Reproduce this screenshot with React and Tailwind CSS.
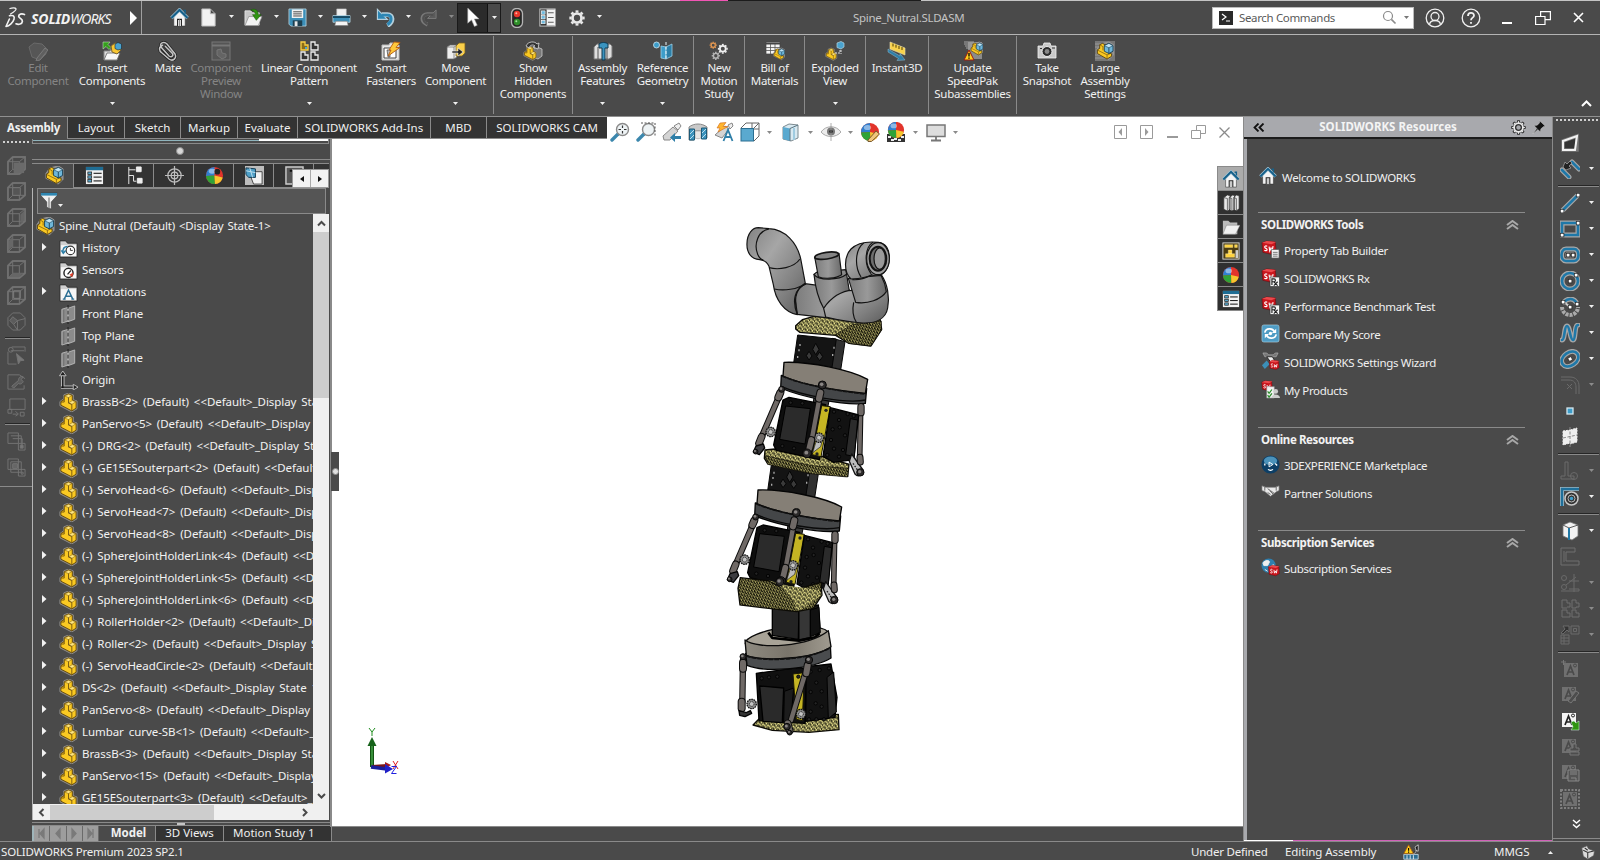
import React from "react";

const Svg = ({ s = 20, vb = 20, className = "", children }) => (
  <svg width={s} height={s} viewBox={`0 0 ${vb} ${vb}`} className={"block shrink-0 " + className} fill="none">
    {children}
  </svg>
);

const Caret = ({ c = "#f0f0f0", className = "" }) => (
  <svg width="5" height="3" viewBox="0 0 5 3" className={"block shrink-0 " + className}>
    <path d="M0 0h5L2.500 3z" fill={c} />
  </svg>
);

/* ---------- shared icon shapes ---------- */
const PartShape = () => (
  <g strokeLinejoin="round">
    <path d="M1 9l4-3V2l5-2 5 2v5l4 1.500v8L13.500 20 1 13.500z" fill="#8d8064" stroke="#8d8d8d" strokeWidth="1" />
    <path d="M2 9L5.500 7V3L10 1l4 1.500v5L18 9v7l-4.500 2.800L2 12.800z" fill="#fac922" stroke="#5d430a" strokeWidth=".9" />
    <path d="M6 3.200L10 1.400l3.600 1.300L10 4.800z" fill="#ffe680" stroke="#6b4d0c" strokeWidth=".5" />
    <path d="M10 10.500l4-2.500 3.600 1.300L13.500 12z" fill="#ffe680" stroke="#6b4d0c" strokeWidth=".5" />
    <path d="M10 4.800v5.700l3.500 1.500v6.500M5.500 7v2.500L2 9.500l0 0" stroke="#6b4d0c" strokeWidth=".9" />
  </g>
);
const AsmShape = () => (
  <g strokeLinejoin="round">
    <path d="M1 8l4-6 9-2 5 3v11l-5 5L1 13z" fill="#8a8a8a" stroke="#999" />
    <path d="M1.500 8.500L4 7V3l3-1.500 4 2L12 11l5 2v2.500L12 18.500 1.500 12.500z" fill="#fac922" stroke="#4c3808" strokeWidth=".9" />
    <path d="M4 3l3.500 2L7.500 9M12 14v4M2 9l10 5 5-2" stroke="#7c5a10" strokeWidth=".8" />
    <path d="M9 4l5-2.500L18.500 4v6L14 12.500 9 10z" fill="#6fb7da" stroke="#12394f" strokeWidth=".9" />
    <path d="M9 4l5 2.200L18.500 4 14 1.500z" fill="#bfe4f5" stroke="#12394f" strokeWidth=".6" />
    <path d="M14 6.200v6.300" stroke="#12394f" strokeWidth=".9" />
  </g>
);
const HomeShape = () => (
  <g>
    <path d="M4 9v10h12V9l-6-6z" fill="#f4f4f4" stroke="#333" strokeWidth=".6" />
    <path d="M8 19v-7h4v7" fill="#fff" stroke="#222" strokeWidth="1.200" />
    <path d="M10 12v7" stroke="#888" />
    <path d="M1.500 10.500L10 2l8.500 8.500" stroke="#a9c7d6" strokeWidth="3.600" />
    <path d="M1.500 10.500L10 2l8.500 8.500" stroke="#15608a" strokeWidth="2.200" />
    <path d="M14 2.500h2V6" stroke="#15608a" strokeWidth="1.500" />
  </g>
);
const ListShape = () => (
  <g>
    <rect x="1" y="1" width="18" height="18" fill="#f2f2f2" />
    <rect x="1" y="1" width="18" height="3.500" fill="#1f6d94" />
    {[6, 10, 14].map((y) => (
      <g key={y}>
        <rect x="3" y={y + 0.300} width="4" height="2.600" fill="#58a9cf" stroke="#222" strokeWidth=".8" />
        <path d={`M9 ${y + 1.700}h8.500`} stroke="#222" strokeWidth="1.200" />
      </g>
    ))}
  </g>
);
const BallShape = () => (
  <g>
    <circle cx="10" cy="10" r="9" fill="#e2342b" />
    <path d="M10 10V1A9 9 0 0 0 1 10.500z" fill="#2f7fd0" />
    <path d="M10 10L1 10.500A9 9 0 0 0 10.500 19z" fill="#2fa338" />
    <path d="M10 10l.5 9A9 9 0 0 0 18.600 12z" fill="#f6c62d" />
    <ellipse cx="7.500" cy="5.500" rx="3.600" ry="2.600" fill="#fff" opacity=".45" />
  </g>
);
const GearShape = ({ c = "#e8e8e8" }) => (
  <g stroke={c}>
    <circle cx="10" cy="10" r="5" strokeWidth="3" />
    {[0, 45, 90, 135, 180, 225, 270, 315].map((a) => (
      <path key={a} d="M10 4V1.500" strokeWidth="3.200" transform={`rotate(${a} 10 10)`} />
    ))}
  </g>
);
const SwCube = () => (
  <g>
    <path d="M1 3l5-2 9 1 1 10-5 3-9-2z" fill="#c9161d" stroke="#6b0a0e" strokeWidth=".6" />
    <path d="M1 3l10 1.500 5-2.500L6 1z" fill="#ea4a4d" />
    <path d="M6.500 6.800c-1-1-2.800-.6-2.600.8s2.400 1 2.500 2.400-1.800 1.600-2.900.6M8.500 7l.7 4.500 1.300-3 1.200 3 1-5" stroke="#fff" strokeWidth="1.200" />
  </g>
);

/* ---------- title bar ---------- */
const Logo = () => (
  <div className="flex h-full w-[142px] shrink-0 items-center border-r border-[#a0a0a0] pl-[5px]">
    <svg width="21" height="24" viewBox="0 0 21 24" fill="none" stroke="#f2f2f2" strokeLinecap="round" strokeLinejoin="round">
      <path d="M5 2.500c2-.8 5.500-1 6 .2.500 1.600-3 3.800-5.500 5.300" strokeWidth="1.300" />
      <path d="M4.500 9.800c3.500-1 5.500.2 4.500 3.400C8 16.500 4.500 20 1 20.500l3.400-7.500" strokeWidth="1.600" />
      <path d="M19.500 8.500c-3-1.200-6-.3-5.800 1.800.2 2 4 2.500 3.700 5-.3 2.700-3.700 3.600-6.400 2.500" strokeWidth="1.700" />
    </svg>
    <div className="ml-[5px] mt-[2px] flex w-[86px] text-[14px] italic leading-none text-[#f2f2f2]">
      <span className="font-bold tracking-[-0.100px]">SOLID</span>
      <span className="tracking-[-0.900px]">WORKS</span>
    </div>
    <svg width="8" height="14" viewBox="0 0 8 14" className="ml-[13px]">
      <path d="M0 0l7 7-7 7z" fill="#fff" />
    </svg>
  </div>
);

const QI = {
  home: <HomeShape />,
  doc: <path d="M3 1h9l5 5v13H3z M12 1v5h5" fill="#f1f1f1" stroke="#bbb" />,
  open: (
    <g>
      <path d="M1 3h6l2 2h7v13H1z" fill="#c8c8c8" stroke="#eee" strokeWidth=".8" />
      <path d="M1 18.500L5 9h14l-4 9.500z" fill="#f3f3f3" stroke="#888" strokeWidth=".7" />
      <path d="M7 2c5-2 8 0 8 5h3l-5 6-4-6h3c0-3-2-4-5-5z" fill="#2f9410" stroke="#1c5c0a" strokeWidth=".6" />
    </g>
  ),
  save: (
    <g>
      <path d="M1 1h18v18H3l-2-2z" fill="#3c8fb8" stroke="#bcd9e6" strokeWidth=".8" />
      <rect x="4" y="1.500" width="12" height="9" fill="#f2f2f2" />
      <path d="M5.500 4h9M5.500 6.200h9M5.500 8.400h9" stroke="#444" />
      <path d="M5 13h10v6H5z" fill="#1d3f50" />
      <path d="M7 14h3v5H7z" fill="#e8e8e8" />
    </g>
  ),
  print: (
    <g>
      <path d="M5 1h10v8H5z" fill="#f0f0f0" stroke="#bbb" strokeWidth=".6" />
      <path d="M1 8h18v7H1z" fill="#3c8fb8" stroke="#bcd9e6" strokeWidth=".8" />
      <path d="M1 9.500h18" stroke="#174a64" strokeWidth="2" />
      <path d="M4 14h12l1 4.500H3z" fill="#f4f4f4" stroke="#777" strokeWidth=".6" />
    </g>
  ),
  undo: (
    <g>
      <path d="M6 7h6c6.500 0 6.500 8 0 11.500" stroke="#b4d0dd" strokeWidth="5" />
      <path d="M1.500 1.500v10.500H12z" fill="#2c86b4" stroke="#b4d0dd" strokeWidth="1.200" />
      <path d="M6 7.500h6c5 0 5.500 7 0 10" stroke="#2c86b4" strokeWidth="3" />
    </g>
  ),
  redo: (
    <g>
      <path d="M15 6.500H9c-7 0-7.500 8 0 11" stroke="#7a7a7a" strokeWidth="4" />
      <path d="M18 2v9h-9z" fill="#5b5b5b" stroke="#7a7a7a" />
      <path d="M15 7H9c-6 0-6 7 0 10" stroke="#505050" strokeWidth="2.400" />
    </g>
  ),
  cursor: <path d="M5 0v16l4-3.500 3 7 3-1.300-3-6.700h5z" fill="#fff" stroke="#999" strokeWidth=".6" />,
  light: (
    <g>
      <rect x="4.500" y=".5" width="11" height="19" rx="5" fill="#262626" stroke="#b5b5b5" strokeWidth="1.300" />
      <circle cx="10" cy="6" r="3.200" fill="#e8372c" />
      <circle cx="10" cy="14" r="3.200" fill="#2f8f2a" />
      <circle cx="9.300" cy="5.200" r="1" fill="#ffb0a0" />
      <circle cx="9.300" cy="13.200" r="1" fill="#a5e29b" />
    </g>
  ),
  list: (
    <g>
      <rect x="2" y="1" width="16" height="18" fill="#222" stroke="#d0d0d0" />
      <rect x="9" y="1.500" width="9" height="17" fill="#f2f2f2" />
      {[3, 8, 13].map((y) => (
        <g key={y}>
          <rect x="3.500" y={y} width="4" height="3.600" fill="#6db9dd" stroke="#fff" strokeWidth=".7" />
          <path d={`M10.500 ${y + 2}h6`} stroke="#555" />
        </g>
      ))}
    </g>
  ),
  gear: <GearShape />,
};

const Quick = ({ name, w, dd, ddc }) => (
  <div className={"flex h-full shrink-0 items-center " + w}>
    <Svg s={19}>{QI[name]}</Svg>
    {dd && <Caret className="ml-[11px] mt-[-2px]" c={ddc} />}
  </div>
);

const TitleBar = () => (
  <div className="flex h-[34px] shrink-0 items-center border-b border-[#b4b4b4]">
    <Logo />
    <div className="flex h-full w-[28px] shrink-0" />
    <Quick name="home" w="w-[29px]" />
    <Quick name="doc" w="w-[45px]" dd />
    <Quick name="open" w="w-[44px]" dd />
    <Quick name="save" w="w-[44px]" dd />
    <Quick name="print" w="w-[44px]" dd />
    <Quick name="undo" w="w-[43px]" dd />
    <Quick name="redo" w="w-[38px]" dd ddc="#8a8a8a" />
    <div className="flex h-[30px] w-[44px] shrink-0 border border-[#1a1a1a] bg-[#4a4a4a]">
      <div className="flex w-[30px] items-center justify-center border-r border-[#111] bg-[#2b2b2b]">
        <Svg s={19}>{QI.cursor}</Svg>
      </div>
      <div className="flex flex-1 items-center justify-center">
        <Caret />
      </div>
    </div>
    <div className="ml-[6px] flex h-full items-center gap-[11px]">
      <Svg s={20}>{QI.light}</Svg>
      <Svg s={19}>{QI.list}</Svg>
      <Svg s={18}>{QI.gear}</Svg>
      <Caret className="mt-[-2px]" />
    </div>
    <div className="ml-[251px] w-[120px] whitespace-nowrap tracking-[-0.280px] text-[#c4c4c4]">Spine_Nutral.SLDASM</div>
    <div className="ml-auto flex h-[22px] w-[202px] items-center border border-[#bbb] bg-white pl-[6px]">
      <div className="flex h-[14px] w-[14px] items-center justify-center bg-[#2a2a2a]">
        <svg width="10" height="9" viewBox="0 0 10 9" fill="none" stroke="#fff">
          <path d="M1 1l4 3-4 3M5 8h4" strokeWidth="1.200" />
        </svg>
      </div>
      <span className="ml-[6px] whitespace-nowrap tracking-[-0.350px] text-[#5a5a5a]">Search Commands</span>
      <Svg s={15} className="ml-auto">
        <circle cx="8" cy="8" r="6" stroke="#8a8a8a" strokeWidth="1.600" />
        <path d="M12.500 12.500L18 18" stroke="#8a8a8a" strokeWidth="2.200" />
      </Svg>
      <Caret c="#777" className="ml-[7px] mr-[4px]" />
    </div>
    <div className="flex w-[186px] shrink-0 items-center pl-[11px]">
      <Svg s={20}>
        <circle cx="10" cy="10" r="8.800" stroke="#f0f0f0" strokeWidth="1.300" />
        <circle cx="10" cy="8.500" r="4" stroke="#f0f0f0" strokeWidth="1.300" />
        <path d="M4.500 16.500c.5-3 2-4 5.500-4s5 1 5.500 4" stroke="#f0f0f0" strokeWidth="1.300" />
      </Svg>
      <Svg s={20} className="ml-[16px]">
        <circle cx="10" cy="10" r="8.800" stroke="#f0f0f0" strokeWidth="1.300" />
        <path d="M7 8c0-4 6-4 6-.500 0 2.300-3 2-3 4.800M10 14v1.800" stroke="#f0f0f0" strokeWidth="1.800" />
      </Svg>
      <div className="ml-[21px] mt-[10px] h-[2px] w-[10px] bg-white" />
      <svg width="16" height="14" viewBox="0 0 16 14" className="ml-[23px]" fill="none" stroke="#fff" strokeWidth="1.200">
        <path d="M5.600 5V.6h9.800v8H10M.6 5.500H10v8H.6z" />
      </svg>
      <svg width="11" height="11" viewBox="0 0 11 11" className="ml-[22px]" stroke="#fff" strokeWidth="1.600">
        <path d="M1 1l9 9M10 1l-9 9" />
      </svg>
    </div>
  </div>
);

/* ---------- ribbon ---------- */
const RI = {
  edit: (
    <g stroke="#6a6a6a" fill="#565656">
      <path d="M1 6l5-4 8 1 4 4v6l-6 6-8-3z" />
      <path d="M9 17l8-10 3 2-8 10-4 1z" fill="#5f5f5f" stroke="#7a7a7a" />
    </g>
  ),
  insert: (
    <g>
      <path d="M2 10h6l1-2h6v11H2z" fill="#ddd" stroke="#888" />
      <path d="M2 19l3-7h13l-3 7z" fill="#f7f7f7" stroke="#666" strokeWidth=".8" />
      <path d="M1 1h7L6 3.500l3 3-2 2-3-3L1 8z" fill="#35a01c" stroke="#d5e8d0" strokeWidth=".5" />
      <path d="M9 5l4-3 6 1v6l-4 4-5-2z" fill="#f8c733" stroke="#7a6230" />
      <path d="M13 3l3-1.500L19.500 3v5L16 9l-3-1.500z" fill="#4aa3cf" stroke="#123" strokeWidth=".6" />
    </g>
  ),
  mate: (
    <g fill="none">
      <path d="M5 4c-5 2-4 6-1 8l7 6c4 3 8-1 6-5L9 3C6 0 1 2 3 6l8 9c3 2 5-1 3-3L7 5" stroke="#222" strokeWidth="3" />
      <path d="M5 4c-5 2-4 6-1 8l7 6c4 3 8-1 6-5L9 3C6 0 1 2 3 6l8 9c3 2 5-1 3-3L7 5" stroke="#c4c4c4" strokeWidth="1.500" />
    </g>
  ),
  preview: (
    <g stroke="#777" fill="#555">
      <rect x="1" y="1" width="18" height="18" />
      <path d="M1 4.500h18" strokeWidth="2" />
      <path d="M6 9l4-1 1 4 4 1v3l-4 2-5-4z" fill="#646464" />
    </g>
  ),
  linear: (
    <g fill="#333" stroke="#ececec" strokeWidth="1.300">
      <path d="M2 1h4v3h3v5H2z" fill="#8a6d18" stroke="#f9cf45" />
      <path d="M12 1h4v3h3v5h-7zM2 11h4v3h3v5H2zM12 11h4v3h3v5h-7z" />
      <path d="M6 6h2v2H6z" fill="#49a6d6" stroke="none" />
    </g>
  ),
  smart: (
    <g>
      <path d="M1 4h7l1-2h6v2h3v15H1z" fill="#e9e9e9" stroke="#bbb" />
      <path d="M3 7h12v10H3z" fill="#fff" stroke="#444" />
      <path d="M6 9h5v3H9v4H7z" fill="#bbb" stroke="#444" strokeWidth=".7" />
      <path d="M13 1l6 .5-4 5h4L7 15l3-6H8z" fill="#ffc83a" stroke="#b35a12" strokeWidth=".9" />
    </g>
  ),
  move: (
    <g>
      <path d="M1 6l3-2h7v12l-3 2H1z" fill="#eee" stroke="#666" strokeWidth=".8" />
      <path d="M1 6h7v12M8 6l3-2" stroke="#777" strokeWidth=".8" />
      <path d="M10 5l3-3h6v10l-3 3h-6z" fill="#fbd04a" stroke="#7c6222" strokeWidth=".8" />
      <path d="M6 10h6V7l5 4-5 4v-3H6z" fill="#222" stroke="#eee" strokeWidth=".6" />
    </g>
  ),
  show: (
    <g>
      <path d="M10 8l4-2 5 2v7l-4 3-5-2z" fill="#777" stroke="#ccc" strokeWidth=".8" />
      <g transform="translate(0 5) scale(.72)"><PartShape /></g>
      <path d="M3 5c2-5 9-5 11-2l2-1-1 6-5-2 2-1c-2-2-5-1-6 2z" fill="#333" stroke="#ddd" strokeWidth=".8" />
    </g>
  ),
  feat: (
    <g>
      <path d="M1 6l3-3h13l2 2v11l-3 2H1z" fill="#dedede" stroke="#777" />
      <path d="M5 6v12M14 6v12" stroke="#555" />
      <path d="M6 3c2-2 7-2 9 0v4h-3v12H9V7H6z" fill="#3a93bf" stroke="#10384f" />
    </g>
  ),
  refgeo: (
    <g>
      <circle cx="3.500" cy="4" r="3" fill="#3d9dca" stroke="#d0e6f0" strokeWidth=".8" />
      <path d="M8 5l5 1v12l-5-1z" fill="#3d9dca" stroke="#9cd0e8" strokeWidth=".8" />
      <path d="M13 6l6-3v12l-6 3z" fill="#2c7fa8" stroke="#9cd0e8" strokeWidth=".8" />
      <path d="M13 1v18" stroke="#e8f4fa" strokeDasharray="3 1.500" />
    </g>
  ),
  motion: (
    <g>
      <g transform="translate(0 0) scale(.42)"><GearShape c="#e89a52" /></g>
      <g transform="translate(8 2) scale(.58)"><GearShape c="#f0f0f0" /></g>
      <g transform="translate(2 10) scale(.48)"><GearShape c="#b5b5b5" /></g>
    </g>
  ),
  bom: (
    <g>
      <path d="M1 1h14v12H1z" fill="#f4f4f4" stroke="#444" strokeWidth=".7" />
      <path d="M1 2.500h14" stroke="#444" strokeWidth="2" />
      <path d="M1 6.500h14M1 9.500h14M5.500 3v10M10 3v10" stroke="#555" strokeWidth=".8" />
      <g transform="translate(8 7) scale(.62)"><AsmShape /></g>
    </g>
  ),
  exploded: (
    <g>
      <g transform="translate(0 7) scale(.62)"><PartShape /></g>
      <path d="M12 2l4-1.500 3 1.500v4L16 8l-4-1.500z" fill="#4aa3cf" stroke="#b5d5e3" strokeWidth=".7" />
      <path d="M10 12h5V9M16 9v4" stroke="#ddd" strokeDasharray="2 1" />
    </g>
  ),
  instant: (
    <g>
      <path d="M3 1l15 6v7L3 8z" fill="#f8d24b" stroke="#eadfae" strokeWidth=".6" />
      <path d="M6 2.500v3M9 3.700v3M12 5v3M15 6v3" stroke="#4d3c0a" />
      <path d="M1 8l12 7v-2.500l5 6.500-8 .5 1.500-2L1 11z" fill="#2f7fa8" stroke="#8fbdd2" strokeWidth=".5" />
    </g>
  ),
  update: (
    <g>
      <path d="M5 1h14v17H5z" fill="#8b8b8b" />
      <path d="M1 1h10M1 3h10M2 5h8M3 7h6" stroke="#a5a5a5" />
      <g transform="translate(7 1) scale(.7)"><AsmShape /></g>
      <path d="M6 9l5 10H1z" fill="#ffcf1c" stroke="#9c1c12" />
      <path d="M6 12v3.500M6 16.500v1.200" stroke="#000" strokeWidth="1.300" />
    </g>
  ),
  snapshot: (
    <g>
      <path d="M1 5h5l1-3h6l1 3h5v12H1z" fill="#c9c9c9" stroke="#f2f2f2" strokeWidth=".8" />
      <circle cx="10" cy="10.500" r="5" fill="#2c2c2c" stroke="#eee" />
      <circle cx="10" cy="10.500" r="2.400" fill="#888" />
      <path d="M3 7.500h2M15 7h3" stroke="#333" />
    </g>
  ),
  large: (
    <g>
      <path d="M0 0h20v20H0z" fill="#777" />
      <path d="M0 3h8M0 6h8M0 14h8M0 17h12" stroke="#999" />
      <g transform="translate(1 1) scale(.92)"><AsmShape /></g>
    </g>
  ),
};

const RIBBON = [
  ["w-[76px]", "edit", "Edit\nComponent", { dim: true }],
  ["w-[72px]", "insert", "Insert\nComponents", { dd: true }],
  ["w-[40px]", "mate", "Mate", {}],
  ["w-[66px]", "preview", "Component\nPreview\nWindow", { dim: true }],
  ["w-[110px]", "linear", "Linear Component\nPattern", { dd: true }],
  ["w-[54px]", "smart", "Smart\nFasteners", {}],
  ["w-[76px]", "move", "Move\nComponent", { dd: true, sep: true }],
  ["w-[79px]", "show", "Show\nHidden\nComponents", { sep: true }],
  ["w-[59px]", "feat", "Assembly\nFeatures", { dd: true }],
  ["w-[62px]", "refgeo", "Reference\nGeometry", { dd: true, sep: true }],
  ["w-[51px]", "motion", "New\nMotion\nStudy", { sep: true }],
  ["w-[60px]", "bom", "Bill of\nMaterials", { sep: true }],
  ["w-[61px]", "exploded", "Exploded\nView", { dd: true, sep: true }],
  ["w-[63px]", "instant", "Instant3D", { sep: true }],
  ["w-[88px]", "update", "Update\nSpeedPak\nSubassemblies", { sep: true }],
  ["w-[60px]", "snapshot", "Take\nSnapshot", {}],
  ["w-[56px]", "large", "Large\nAssembly\nSettings", {}],
];

const Ribbon = () => (
  <div className="flex h-[82px] shrink-0 border-b border-[#909090] pt-[1px]">
    {RIBBON.map(([w, icon, label, o]) => (
      <div
        key={icon}
        className={
          "flex h-[78px] shrink-0 flex-col items-center pt-[5px] " + w + (o.sep ? " border-r border-[#8a8a8a]" : "")
        }
      >
        <Svg s={20}>{RI[icon]}</Svg>
        <div
          className={
            "h-[40px] whitespace-pre text-center leading-[13px] tracking-[-0.300px] " +
            (o.dim ? "text-[#858585]" : "text-[#f0f0f0]")
          }
        >
          {label}
        </div>
        {o.dd && <Caret className="mt-[1px]" />}
      </div>
    ))}
    <div className="flex flex-1 items-end justify-end pb-[9px] pr-[8px]">
      <svg width="11" height="7" viewBox="0 0 11 7" fill="none" stroke="#fff" strokeWidth="2">
        <path d="M1 6l4.500-4.500L10 6" />
      </svg>
    </div>
  </div>
);

const TABS = [
  ["Layout", "w-[57px]"],
  ["Sketch", "w-[56px]"],
  ["Markup", "w-[57px]"],
  ["Evaluate", "w-[60px]"],
  ["SOLIDWORKS Add-Ins", "w-[133px]"],
  ["MBD", "w-[56px]"],
  ["SOLIDWORKS CAM", "w-[121px]"],
];
const CommandTabs = () => (
  <div className="flex h-[22px] w-[607px] shrink-0 bg-[#333] leading-[22px] text-[#f0f0f0]">
    <div className="w-[67px] bg-[#4a4a4a] text-center font-bold tracking-[-0.200px]">Assembly</div>
    {TABS.map(([t, w]) => (
      <div key={t} className={"whitespace-nowrap border-b border-l border-[#8a8a8a] text-center " + w}>
        {t}
      </div>
    ))}
  </div>
);

/* ---------- heads-up toolbar ---------- */
const lens = (
  <g>
    <path d="M2 18l6-6" stroke="#3b87ad" strokeWidth="3.400" strokeLinecap="round" />
    <circle cx="12.500" cy="7.500" r="6" fill="#eef3f5" stroke="#8b8b8b" strokeWidth="1.400" />
  </g>
);
const HUD = [
  [<g>{lens}<path d="M12.500 3.500v8M8.500 7.500h8" stroke="#333" strokeWidth="1.200" strokeDasharray="2.500 3" /></g>, "w-[26px]"],
  [<g>{lens}<path d="M5 1h14v14" stroke="#555" strokeDasharray="2 1.500" /></g>, "w-[26px]"],
  [
    <g>
      <path d="M1 14l10-9 5 4-8 9-6 0z" fill="#d4d4d4" stroke="#888" />
      <path d="M12 4l5-3 2 3-3 4z" fill="#eee" stroke="#888" />
      <path d="M19 14h-6v-3l-5 4.500 5 4.500v-3h6z" fill="#2f7fa8" />
    </g>,
    "w-[26px]",
  ],
  [
    <g>
      <path d="M1 5c5-4 13-4 18 0v11h-5V9H6v9H1z" fill="#c9c9c9" stroke="#888" />
      <path d="M7 9h6v7c-2 1-4 1-6 0z" fill="#e6e6e6" stroke="#999" strokeWidth=".6" />
      <path d="M1.500 7h5v11h-5zM13.500 6h5v11h-5z" fill="#3c93bd" stroke="#1d5a78" />
      <path d="M2 12l4-4M2 17l4-4M14 11l4-4M14 16l4-4" stroke="#bfe0ee" />
    </g>,
    "w-[26px]",
  ],
  [
    <g>
      <path d="M1 13l10-9 4 3-7 9z" fill="#d4d4d4" stroke="#888" />
      <path d="M14 3l4-2 1 3-3 3z" fill="#eee" stroke="#888" />
      <path d="M6 1l6-.5-3 4h5L4 10l2-4H3z" fill="#ffb52e" stroke="#d06a1c" strokeWidth=".6" />
      <path d="M9.500 19l4.500-11 4.500 11M11.500 15h5" stroke="#2f7fa8" strokeWidth="1.800" />
    </g>,
    "w-[26px]",
  ],
  [
    <g>
      <path d="M6 1h13v13M12 1v5M19 7h-5M6 1L1 6M19 1l-5 5M19 14l-5 5" stroke="#666" />
      <rect x="1" y="6.500" width="12.500" height="12.500" fill="#5aa9cf" stroke="#2b6f92" />
    </g>,
    "w-[41px]",
    1,
  ],
  [
    <g>
      <path d="M2 5l6-3 9 1v13l-7 3-8-2z" fill="#d8e9f1" stroke="#7d8a90" />
      <path d="M2 5l7 1.500V19l-7-2z" fill="#5aa9cf" />
      <path d="M9 6.500L17 3M9 6.500V19" stroke="#5a7582" />
      <path d="M13 6v12" stroke="#9fcbe0" strokeWidth="2" />
    </g>,
    "w-[40px]",
    1,
  ],
  [
    <g>
      <path d="M0 10c5-7 15-7 20 0-5 6-15 6-20 0z" fill="#ececec" stroke="#aaa" />
      <circle cx="10" cy="9.500" r="4" fill="#777" />
      <circle cx="10" cy="9.500" r="1.800" fill="#222" />
      <path d="M10 1v18" stroke="#999" strokeWidth=".8" />
    </g>,
    "w-[39px]",
    1,
  ],
  [
    <g>
      <BallShape />
      <path d="M8 18l8-9 3.500 3-8 7.500H8z" fill="#f0c67a" stroke="#7a5b2d" />
    </g>,
    "w-[26px]",
  ],
  [
    <g>
      <path d="M1 12h18v8H1z" fill="#333" />
      <path d="M2 14h3v2H2zM8 16h3v2H8zM15 14h3v2h-3zM5 17h3v2H5zM12 17h3v2h-3z" fill="#eee" />
      <g transform="translate(1 -1) scale(.9)"><BallShape /></g>
    </g>,
    "w-[40px]",
    1,
  ],
  [
    <g>
      <rect x="1" y="3" width="18" height="11.500" fill="#ddd" stroke="#777" strokeWidth="1.500" />
      <path d="M10 14v4M5 18.500h10" stroke="#777" strokeWidth="1.800" />
    </g>,
    "w-[40px]",
    1,
  ],
];
const Hud = () => (
  <div className="absolute left-[610px] top-[5px] flex h-[20px] items-center">
    {HUD.map(([g, w, dd], i) => (
      <div key={i} className={"flex items-center " + w}>
        <Svg s={20}>{g}</Svg>
        {dd && <Caret c="#8a8a8a" className="ml-[7px]" />}
      </div>
    ))}
  </div>
);
const DocButtons = () => (
  <div className="absolute right-[13px] top-[8px] flex h-[14px] items-center gap-[13px]">
    {["M8 3v8L4.500 7z", "M5 3v8L8.500 7z"].map((d) => (
      <svg key={d} width="13" height="14" viewBox="0 0 13 14" fill="none" stroke="#9a9a9a">
        <path d="M.5.5h12v13H.5z" />
        <path d={d} fill="#9a9a9a" stroke="none" />
      </svg>
    ))}
    <div className="ml-[1px] mt-[10px] h-[2px] w-[11px] bg-[#9a9a9a]" />
    <svg width="15" height="14" viewBox="0 0 15 14" fill="none" stroke="#9a9a9a">
      <path d="M5.500 5V.500h9v8H10M.500 5.500h9v8h-9z" />
    </svg>
    <svg width="11" height="11" viewBox="0 0 11 11" stroke="#8a8a8a" strokeWidth="1.300">
      <path d="M.5.5l10 10M10.500.5l-10 10" />
    </svg>
  </div>
);

/* ---------- left view toolbar ---------- */
const cube = (
  <g>
    <path d="M1 6l5-5h13v13l-6 5H1z" stroke="#6c6c6c" strokeWidth="2" />
    <path d="M1 6v13h12V6zM1 6l5-5h13v13l-6 5M13 6l6-5M6 1v13h13M6 14l-5 5" stroke="#747474" strokeWidth="1" />
  </g>
);
const LEFT = [
  <g>{cube}<path d="M7 7h11v11H7z" fill="#6a6a6a" /></g>,
  <g>{cube}<path d="M6 6h8v8H6z" fill="#555" stroke="#777" /></g>,
  <g>{cube}<path d="M14 7l4-4v10l-4 4z" fill="#666" /></g>,
  <g>{cube}<path d="M2 7l4-4v10l-4 4z" fill="#666" /></g>,
  <g>{cube}<path d="M2 18l4-4h11l-4 4z" fill="#666" /></g>,
  <g>{cube}<path d="M7 5h7v8H7z" stroke="#808080" /></g>,
  <g stroke="#747474"><path d="M1 6l5-5h8l5 5v8l-5 5H6l-5-5z" /><path d="M6 5l5 4-4 4-4-4zM11 9l8-2M11 9v10M7 13l4 6" fill="#5c5c5c" /></g>,
  "sep",
  <g stroke="#747474"><path d="M5 1h14v5M1 6v13h9M4 5l14 0" /><circle cx="4" cy="4" r="2.500" /><path d="M10 8l8 7-4 .5L12 19z" fill="#777" /></g>,
  <g stroke="#747474"><path d="M1 3h12l6 4M1 3v15h17v-4" /><path d="M5 15l7-6c0-3 2-5 5-4l-2 3 2 2c-1 3-4 3-5 2l-5 5z" fill="#5c5c5c" /></g>,
  <g stroke="#747474"><path d="M3 1h16v11H3zM1 12h4v4H1zM14 15h4v4h-4zM6 17h5M9 14l3 3-3 2" /></g>,
  "sep",
  <g stroke="#747474"><path d="M1 1h11v11H1zM4 4h11v11M6 7h10v9M12 12h7v7h-7z" /><path d="M14 14h3v3h-3z" fill="#777" /></g>,
  <g stroke="#747474"><path d="M1 1h11v11H1zM4 4h11v11H4zM12 12h7v7h-7z" /><path d="M6 6h5v5H6z" fill="#666" /><path d="M15 15h2v2h-2z" /></g>,
];
const Grip = ({ n, className = "" }) => (
  <div className={"flex gap-[2px] " + className}>
    {Array.from({ length: n }, (_, i) => (
      <i key={i} className="h-[2px] w-[2px] shrink-0 bg-[#cfcfcf]" />
    ))}
  </div>
);
const Sep = ({ className = "" }) => (
  <div className={"flex h-[8px] w-full flex-col pt-[3px] " + className}>
    <div className="h-px bg-[#262626]" />
    <div className="h-px bg-[#8a8a8a]" />
  </div>
);
const LeftBar = () => (
  <div className="flex w-[32px] shrink-0 flex-col items-center">
    <Grip n={7} className="mb-[9px] mt-[2px]" />
    {LEFT.map((g, i) =>
      g === "sep" ? (
        <Sep key={i} className="pl-[5px] pr-[2px]" />
      ) : (
        <div key={i} className="flex h-[26px] items-center">
          <Svg s={19}>{g}</Svg>
        </div>
      )
    )}
    <div className="mt-[6px] h-px w-full bg-[#8a8a8a]" />
  </div>
);

/* ---------- feature manager ---------- */
const FTABS = [
  <AsmShape />,
  <ListShape />,
  <g stroke="#eee" fill="none"><path d="M4 1v18M4 4h7M4 10h5M9 10v6h3" /><path d="M12 1h5v5h-5zM13 13h5v5h-5z" fill="#eee" /></g>,
  <g stroke="#bdbdbd" strokeWidth="1.300"><circle cx="10" cy="10" r="7" /><circle cx="10" cy="10" r="3.500" /><path d="M10 0v20M0 10h20" /></g>,
  <g><BallShape /><circle cx="13" cy="6" r="3" fill="#222" /></g>,
  <g><path d="M0 0h20v20H0z" fill="#bdbdbd" /><path d="M4 6h14v13H9z" fill="#f3f3f3" stroke="#444" /><path d="M1 2l10 1v9H4L1 9z" fill="#4fa0c8" stroke="#12394f" /><path d="M1 5l10 2M5 2l3 10" stroke="#bfe0ee" /></g>,
  <g><path d="M1 1h18v18H1z" fill="#555" stroke="#ccc" strokeWidth="1.500" /><path d="M5 5h9v9" stroke="#111" strokeWidth="2" /></g>,
];
const folder = <path d="M1 2h6l2 2.500h10V19H1z" fill="#cfcfcf" stroke="#222" strokeWidth=".8" />;
const sheet = <path d="M2 6.500h16V18H2z" fill="#f6f6f6" />;
const TI = {
  part: <PartShape />,
  history: <g>{folder}{sheet}<circle cx="12" cy="12" r="4.500" stroke="#333" strokeWidth="1.200" fill="#fff" /><path d="M12 9.500V12h2.500" stroke="#333" /><path d="M4 14c0-5 3-6 5-6M2.500 12l2 3 2.500-3" stroke="#2c7fa8" strokeWidth="1.600" /></g>,
  sensors: <g>{folder}{sheet}<circle cx="10" cy="12.500" r="4.800" stroke="#222" strokeWidth="1.500" fill="#fff" /><path d="M9 14l3.500-4" stroke="#222" strokeWidth="1.300" /><path d="M11 14.500l4-2.500-1 5z" fill="#e0402c" /></g>,
  annot: <g>{folder}{sheet}<path d="M5.500 17L10 7.500 14.500 17M7.500 14h5M4 17h3M13 17h3" stroke="#2c6f94" strokeWidth="1.500" /></g>,
  plane: <g><path d="M3 4.500l6.500-2V17L3 19zM9.500 3.500L16.500 1v14l-7 2.500z" fill="#8b8b8b" stroke="#b5b5b5" /><path d="M9.500 0v20" stroke="#1c1c1c" strokeDasharray="4 2" /><path d="M5 5v13" stroke="#6d6d6d" /></g>,
  origin: <g><path d="M4 18V5M2 17h14" stroke="#bdbdbd" strokeWidth="3.600" /><path d="M4 18V5M2 17h14" stroke="#111" strokeWidth="1.500" /><path d="M4 0l3.500 5h-7zM20 17l-5 3v-6z" fill="#222" stroke="#bdbdbd" /></g>,
};
const TREE = [
  ["History", "history", 1],
  ["Sensors", "sensors", 0],
  ["Annotations", "annot", 1],
  ["Front Plane", "plane", 0],
  ["Top Plane", "plane", 0],
  ["Right Plane", "plane", 0],
  ["Origin", "origin", 0],
  ...[
    "BrassB<2>",
    "PanServo<5>",
    "(-) DRG<2>",
    "(-) GE15ESouterpart<2>",
    "(-) ServoHead<6>",
    "(-) ServoHead<7>",
    "(-) ServoHead<8>",
    "(-) SphereJointHolderLink<4>",
    "(-) SphereJointHolderLink<5>",
    "(-) SphereJointHolderLink<6>",
    "(-) RollerHolder<2>",
    "(-) Roller<2>",
    "(-) ServoHeadCircle<2>",
    "DS<2>",
    "PanServo<8>",
    "Lumbar curve-SB<1>",
    "BrassB<3>",
    "PanServo<15>",
    "GE15ESouterpart<3>",
  ].map((n) => [n + " (Default) <<Default>_Display State 1>", "part", 1]),
];

const Chevron = ({ d, w = 9, h = 9 }) => (
  <svg width={w} height={h} viewBox="0 0 9 9" fill="none" stroke="#4a4a4a" strokeWidth="2" className="block">
    <path d={d} />
  </svg>
);

const FeaturePanel = () => (
  <div className="flex w-[298px] shrink-0 flex-col">
    <div className="mr-[1px] flex h-[5px] border border-t-0 border-[#8a8a8a]">
      <div className="h-[2px] w-[226px] border-b border-[#8fb4bc]" />
      <div className="h-[2px] flex-1 bg-white" />
    </div>
    <div className="flex h-[16px] items-center justify-center border-b border-[#8a8a8a] pr-[2px]">
      <i className="h-[8px] w-[8px] rounded-full border border-[#8d8d8d] bg-[#d8d8d8]" />
    </div>
    <div className="relative mr-[1px] mt-[3px] flex h-[26px] overflow-hidden border-t border-[#8a8a8a] pl-[2px]">
      {FTABS.map((g, i) => (
        <div
          key={i}
          className={
            "flex w-[40px] shrink-0 items-center justify-center border-r border-[#8a8a8a] pl-[1px] " +
            (i ? "border-b bg-[#333]" : "bg-[#4a4a4a]")
          }
        >
          <Svg s={19}>{g}</Svg>
        </div>
      ))}
      <div className="flex-1 bg-[#333]" />
      <div className="absolute bottom-0 right-0 flex h-[19px] w-[37px] border border-[#999] bg-[#f2f2f2]">
        <div className="flex flex-1 items-center justify-center border-r border-[#aaa]">
          <svg width="4" height="6" viewBox="0 0 4 6"><path d="M4 0v6L0 3z" fill="#111" /></svg>
        </div>
        <div className="flex flex-1 items-center justify-center">
          <svg width="4" height="6" viewBox="0 0 4 6"><path d="M0 0v6l4-3z" fill="#111" /></svg>
        </div>
      </div>
    </div>
    <div className="flex h-[632px] flex-col border-l border-[#b5b5b5]">
      <div className="ml-[4px] mr-[4px] flex h-[26px] shrink-0 items-center border border-[#8a8a8a] bg-[#555] pl-[2px]">
        <Svg s={18}>
          <path d="M1 1h18v3L12.500 11v8l-5-2v-6L1 4z" fill="#f0f0f0" stroke="#333" strokeWidth=".6" />
          <path d="M1 1h18v3H1z" fill="#2f87b2" />
          <path d="M10 6v12" stroke="#888" strokeWidth="1.500" />
        </Svg>
        <Caret className="mt-[8px]" />
      </div>
      <div className="flex h-[590px] shrink-0">
        <div className="w-[280px] overflow-hidden tracking-[-0.150px] text-[#f2f2f2] [word-spacing:1px]">
          <div className="mt-[1px] flex h-[22px] items-center whitespace-nowrap pl-[3px]">
            <Svg s={19}>
              <AsmShape />
            </Svg>
            <span className="ml-[4px]">Spine_Nutral (Default) &lt;Display State-1&gt;</span>
          </div>
          {TREE.map(([t, ic, ar]) => (
            <div key={t} className="flex h-[22px] items-center whitespace-nowrap pl-[9px]">
              <svg width="5" height="8" viewBox="0 0 5 8" className="mt-[-3px] shrink-0">
                {ar ? <path d="M0 0l4.500 4L0 8z" fill="#f2f2f2" /> : null}
              </svg>
              <Svg s={19} className="ml-[12px]">{TI[ic]}</Svg>
              <span className={"ml-[4px] " + (ic === "part" ? "tracking-[-0.060px] [word-spacing:2px]" : "")}>{t}</span>
            </div>
          ))}
        </div>
        <div className="flex w-[16px] flex-col items-center bg-[#f0f0f0] text-[#444]">
          <div className="flex h-[18px] items-center"><Chevron d="M1 6.500L4.500 3 8 6.500" /></div>
          <div className="h-[166px] w-full bg-[#cdcdcd]" />
          <div className="mt-auto flex h-[17px] items-center"><Chevron d="M1 3l3.500 3.500L8 3" /></div>
        </div>
      </div>
      <div className="flex h-[16px] w-[296px] shrink-0 items-center bg-[#f0f0f0]">
        <div className="flex w-[17px] justify-center"><Chevron d="M6.500 1L3 4.500 6.500 8" /></div>
        <div className="h-[15px] w-[164px] bg-[#cdcdcd]" />
        <div className="ml-auto mr-[20px]"><Chevron d="M3 1l3.500 3.500L3 8" /></div>
      </div>
    </div>
    <div className="mt-[2px] flex h-[4px] w-full justify-center border-y border-[#8a8a8a]">
      <div className="h-[2px] w-[8px] bg-[#c5c5c5]" />
    </div>
    <div className="flex h-[15px] w-[300px] text-[#f0f0f0]">
      <div className="flex w-[67px] gap-[1px] border-l-2 border-[#9fb5ba] bg-[#6a6a6a] pr-[1px]">
        {["M9 3v9L5 7.500zM4 3v9", "M9 3v9L5 7.500z", "M5 3v9l4-4.500z", "M5 3v9l4-4.500zM10 3v9"].map((d) => (
          <div key={d} className="flex flex-1 justify-center bg-[#9d9d9d]">
            <svg width="14" height="15" viewBox="0 0 14 15"><path d={d} fill="#7a7a7a" stroke="#7a7a7a" strokeWidth="1.300" /></svg>
          </div>
        ))}
      </div>
      <div className="w-[56px] pl-[3px] text-center font-bold leading-[14px]">Model</div>
      <div className="w-[68px] border-l border-[#8a8a8a] bg-[#333] text-center leading-[14px]">3D Views</div>
      <div className="flex-1 border-x border-[#8a8a8a] bg-[#333] pl-[9px] leading-[14px]">Motion Study 1</div>
    </div>
  </div>
);

/* ---------- assembly drawing ---------- */
const Rod = ({ a, b, w = 13 }) => (
  <g strokeLinecap="round">
    <path d={`M${a}L${b}`} stroke="#0c0c0c" strokeWidth={w + 6} />
    <path d={`M${a}L${b}`} stroke="#6f6966" strokeWidth={w} />
  </g>
);
const Ball = ({ x, y, r = 11 }) => (
  <g>
    <circle cx={x} cy={y} r={r} fill="#2c2a2a" stroke="#080808" strokeWidth="3" />
    <circle cx={x - 2} cy={y - 2} r={r * 0.45} fill="#8a8684" />
  </g>
);
const Bearing = ({ x, y }) => (
  <g>
    <circle cx={x} cy={y} r="14" fill="#8f8f8f" stroke="#161616" strokeWidth="4" strokeDasharray="5 2" />
    <circle cx={x} cy={y} r="7" fill="#c4c4c4" stroke="#222" strokeWidth="3" strokeDasharray="3 2" />
  </g>
);
const Bolts = ({ p }) => p.map(([x, y]) => <circle key={x + "-" + y} cx={x} cy={y} r="5" fill="#242424" stroke="#000" strokeWidth="2.500" />);

const Neck = () => (
  <g stroke="#050505" strokeWidth="3">
    <path d="M340-5l38 10-14 92-30-6z" fill="#303030" />
    <path d="M236-15l116 12-14 92-114-20z" fill="#141414" />
    <path d="M290 10l10 18-10 16-9-16zM270 34l9 14-9 12-8-13zM302 36l9 14-9 12-9-13z" fill="#3a3a3a" />
    <path d="M243 12v6M240 28v6M236 48v6M345 20v6M341 42v6" stroke="#aaa" strokeWidth="4" />
  </g>
);
const Segment = () => (
  <g strokeLinejoin="round">
    <Rod a="425 205" b="422 355" w={11} />
    <path d="M285 170l46 8-6 30-44-4z" fill="#3a3a3a" stroke="#080808" strokeWidth="3" />
    <path d="M192 180l18-8 110 22-18 165-130-28-8-16z" fill="#0e0e0e" stroke="#000" strokeWidth="4" />
    <path d="M200 198l74 8-16 106-76-14z" fill="#2b2b2b" stroke="#000" strokeWidth="3" />
    <path d="M308 197l26 3-28 150-26-6z" fill="#c5b523" stroke="#1a1804" strokeWidth="3" />
    <path d="M334 203l85 22-15 134-60 8-32-18z" fill="#121212" stroke="#000" strokeWidth="4" />
    <path d="M394 236l22 4-10 110-26-6z" fill="#2b2b2b" stroke="#000" strokeWidth="3" />
    <Bolts p={[[345, 215], [386, 222], [360, 240], [341, 268], [362, 262], [378, 286], [336, 300], [345, 326], [372, 330], [325, 345], [360, 350], [404, 228], [215, 188], [250, 190], [190, 318], [225, 325]]} />
    <circle cx="321" cy="211" r="5" fill="#222" />
    <circle cx="294" cy="342" r="5" fill="#222" />
    <path d="M299 280l14 10-8 30-24 18z" fill="#bdbdbd" stroke="#222" strokeWidth="2" />
    <Bearing x={300} y={293} />
    <path d="M187 106l-2 38c60 26 190 54 254 46l4-45z" fill="#444648" stroke="#050505" strokeWidth="4" />
    <path d="M188 140c60 26 190 52 252 40" stroke="#0a0a0a" strokeWidth="4" />
    <path d="M195 67c75-3 200 22 251 51l-7 42c-60-5-180-21-247-52z" fill="#857f76" stroke="#050505" strokeWidth="4" />
    <path d="M190 109c70 28 180 46 250 53" stroke="#111" strokeWidth="5" strokeDasharray="14 3" />
    <Ball x="310" y="135" r={12} />
    <Rod a="182 165" b="129 288" />
    <Rod a="184 158" b="178 172" w={18} />
    <Bearing x={155} y={276} />
    <Rod a="128 290" b="120 310" w={17} />
    <Ball x="188" y="148" r={9} />
    <path d="M103 336l8-18 22-6 4 12-16 20z" fill="#3c3c40" stroke="#050505" strokeWidth="4" />
    <Ball x="110" y="335" r={7} />
    <Rod a="304 160" b="276 310" />
    <Rod a="304 158" b="300 176" w={18} />
    <Rod a="277 300" b="271 325" w={17} />
    <Ball x="264" y="340" r={13} />
    <Rod a="426 200" b="426 218" w={16} />
    <path d="M398 342l34 48c3 14-14 24-24 12l-17-38z" fill="#bdbdbd" stroke="#111" strokeWidth="4" />
    <path d="M402 370l16 24" stroke="#222" strokeWidth="4" strokeDasharray="5 4" />
    <Ball x="424" y="397" r={11} />
    <Rod a="423 352" b="424 366" w={15} />
  </g>
);

const Model = () => (
  <svg width="190" height="540" viewBox="0 0 570 1620" fill="none" className="absolute left-[387px] top-[76px]">
    <defs>
      <linearGradient id="pipe" x1="0" y1="0" x2="1" y2="1">
        <stop offset="0" stopColor="#828282" />
        <stop offset=".35" stopColor="#a6a6a6" />
        <stop offset=".7" stopColor="#808080" />
        <stop offset="1" stopColor="#5a5a5a" />
      </linearGradient>
      <linearGradient id="tube" x1="0" y1="0" x2="1" y2="0">
        <stop offset="0" stopColor="#7b7b7b" />
        <stop offset=".5" stopColor="#999" />
        <stop offset="1" stopColor="#696969" />
      </linearGradient>
      <linearGradient id="disk" x1="0" y1="0" x2="1" y2="0">
        <stop offset="0" stopColor="#8e8a80" />
        <stop offset=".5" stopColor="#7a756b" />
        <stop offset="1" stopColor="#a09b90" />
      </linearGradient>
      <pattern id="mesh" width="15" height="12" patternUnits="userSpaceOnUse" patternTransform="rotate(12)">
        <rect width="15" height="12" fill="#ece58e" />
        <path d="M0 0l7 6L0 12M7 6h8M8 0l5 12" stroke="#15140a" strokeWidth="2.800" fill="none" />
      </pattern>
      <pattern id="meshDark" width="9" height="9" patternUnits="userSpaceOnUse" patternTransform="rotate(15)">
        <rect width="9" height="9" fill="#aca662" />
        <path d="M0 0l9 9M9 0L4 5M0 5h5" stroke="#0d0c05" strokeWidth="2.900" fill="none" />
      </pattern>
    </defs>

    <g transform="translate(0 375)"><Neck /></g>
    <g stroke="#0c0b05" strokeWidth="4" strokeLinejoin="round">
      <path d="M230 332l20-18 32-9h200l6 38-32 50-66-8-40-24-108-9-12-10z" fill="url(#mesh)" />
      <path d="M487 318v28l-32 47-66-8-40-26 50-30z" fill="url(#meshDark)" strokeWidth="2" />
    </g>
    <g stroke="#131313" strokeWidth="3.500" strokeLinejoin="round">
      <path d="M226 230l32-24 132 18 8 96-78-12-85-10z" fill="url(#tube)" />
      <path d="M118 38l32 3c50 3 84 42 95 90l14 74c-18 12-40 30-24 94-40-8-66-45-72-90l-13-55c-6-14-14-19-28-20-26-2-40-22-38-50 1-28 16-46 34-46z" fill="url(#pipe)" />
      <path d="M150 42c-34 6-46 46-34 76 4 10 10 16 18 18M150 158c30 8 75 0 93-26M166 222c26 6 72 2 92-17M235 299c-16-40-10-78 26-92" />
      <path d="M285 178l98 0 8 50-76 54c-16-28-26-60-30-104z" fill="url(#tube)" />
      <path d="M285 178c12 18 72 20 98 0l-3-14-88 8z" fill="#8a8a8a" />
      <path d="M287 126l73-11 8 64c-18 12-52 14-70 6z" fill="url(#tube)" />
      <ellipse cx="323" cy="122" rx="36" ry="10" transform="rotate(-8 323 122)" fill="#848484" strokeWidth="5" />
      <path d="M314 280c20-30 54-56 90-54l84-45c18 26 24 66 18 98-5 30-32 46-74 45-40-2-78-10-112-18z" fill="url(#pipe)" />
      <path d="M388 190l22 72c36 6 76-8 92-32-2-16-8-34-16-49z" fill="url(#tube)" />
      <path d="M404 262c-4 20-2 44 8 60" />
      <path d="M396 192c-22-20-22-66 0-90 18-18 44-24 82-20 24 2 34 24 33 48-1 30-16 50-33 50-26 0-46 12-82 12z" fill="url(#pipe)" />
      <path d="M434 84c-26 20-28 70-8 102M400 194c26 2 40-6 60-16M462 82c-24 14-28 64-6 94" />
      <ellipse cx="477" cy="131" rx="34" ry="48" fill="#a0a0a0" />
      <ellipse cx="477" cy="131" rx="25" ry="36" fill="#6e6e6e" strokeWidth="6" />
      <ellipse cx="482" cy="131" rx="17" ry="32" fill="#9a9a9a" />
    </g>

    <g transform="translate(-78 758)"><Neck /></g>
    <path d="M138 705l30-3 110 14 112 32-4 36-110-10-130-28-10-16z" fill="url(#mesh)" stroke="#0c0b05" strokeWidth="4" />
    <path d="M138 722l140 30 110 8-2 26-110-10-130-28z" fill="url(#meshDark)" stroke="#0c0b05" strokeWidth="2" />
    <g transform="translate(0 375)"><Segment /></g>

    <g transform="translate(0 1035)" strokeLinejoin="round">
      <path d="M240 150l58-15 6 85-40 20-22-4z" fill="#181818" stroke="#000" strokeWidth="4" />
      <ellipse cx="204" cy="236" rx="126" ry="34" transform="rotate(-7 204 236)" fill="#a8a397" stroke="#0a0a0a" strokeWidth="4" />
      <path d="M160 135l80 15-2 88-78-12z" fill="#242424" stroke="#000" strokeWidth="4" />
      <path d="M240 150l34-4v86l-34 8z" fill="#363636" stroke="#000" strokeWidth="3" />
      <path d="M274 150l26-8 4 76-30 12z" fill="#111" stroke="#000" strokeWidth="3" />
      <path d="M148 218l12 16 80 8 48-10 14-12" stroke="#000" strokeWidth="8" />
    </g>

    <g transform="translate(-78 758)"><Segment /></g>
    <path d="M64 1088l86 10 60 32 96-28 3 38-26 40-50 10-170-20-6-50z" fill="url(#meshDark)" stroke="#0c0b05" strokeWidth="4" />
    <path d="M148 1096l60 16 92 12 8 16-40 30-34 18c-10-40-40-74-86-92z" fill="url(#mesh)" />
    <Ball x={182} y={1100} r={12} />

    <g transform="translate(0 1035)" strokeLinejoin="round">
      <path d="M102 495l20-20 236-12 2 46-90 8-110-6z" fill="url(#mesh)" stroke="#0c0b05" strokeWidth="4" />
      <path d="M112 340l130-18 20 8-4 160-138-8z" fill="#101010" stroke="#000" strokeWidth="4" />
      <path d="M122 378l72 6-4 104-58-4z" fill="#2a2a2a" stroke="#000" strokeWidth="4" />
      <path d="M196 394l28-10-8 92-22 12z" fill="#1c1c1c" stroke="#000" strokeWidth="3" />
      <path d="M222 342l34-4-6 144-18-4z" fill="#c5b523" stroke="#1a1804" strokeWidth="3" />
      <path d="M262 320l74-8 18 100-6 60-88 12z" fill="#121212" stroke="#000" strokeWidth="4" />
      <path d="M324 352l20-16 8 120-24 20z" fill="#2b2b2b" stroke="#000" strokeWidth="3" />
      <Bolts p={[[275, 335], [302, 330], [330, 325], [292, 368], [275, 396], [308, 394], [290, 430], [308, 440], [275, 455], [270, 478], [292, 478], [315, 478], [128, 355], [150, 352], [175, 350], [238, 350]]} />
      <path d="M80 280l4 36c60 24 200 10 252-22l-2-38z" fill="#4a4c4e" stroke="#050505" strokeWidth="4" />
      <path d="M78 240c40 30 190 20 250-28l8 48c-50 36-200 46-254 26z" fill="url(#disk)" stroke="#0a0a0a" strokeWidth="4" />
      <path d="M82 288c60 20 200 10 252-26" stroke="#111" strokeWidth="5" strokeDasharray="14 3" />
      <Bearing x={98} y={432} />
      <Rod a="72 300" b="70 425" />
      <Rod a="72 308" b="72 326" w={18} />
      <Rod a="68 425" b="68 445" w={18} />
      <Ball x={72} y={290} r={9} />
      <path d="M60 452l22 6 12-6 4 8-20 10-16-4z" fill="#333" stroke="#050505" strokeWidth="4" />
      <Bearing x={246} y={462} />
      <Rod a="262 330" b="216 480" />
      <Rod a="266 316" b="262 340" w={18} />
      <Ball x={270} y={300} r={11} />
      <Rod a="206 490" b="212 512" w={17} />
      <Ball x={204} y={500} r={10} />
      <Ball x={212} y={518} r={7} />
    </g>
  </svg>
);

const Triad = () => (
  <svg width="34" height="52" viewBox="0 0 34 52" className="absolute bottom-[47px] left-[34px]" fill="none">
    <path d="M3 1l3 4 3-4M6 5v4" stroke="#1e8c1e" />
    <path d="M6 40V16" stroke="#135313" strokeWidth="4" />
    <path d="M6 40V16" stroke="#4caf50" strokeWidth="1.300" />
    <path d="M6 10l4.500 9h-9z" fill="#16621a" />
    <path d="M6 39.500l15-1" stroke="#7c1616" strokeWidth="3" />
    <path d="M19 35l6 3-6 4z" fill="#a81c1c" />
    <path d="M5 40l16 2" stroke="#1a1f9c" strokeWidth="3.600" />
    <path d="M19 37l8 5-8 4.500z" fill="#2020c8" />
    <path d="M27 34l5 8M32 34l-5 8" stroke="#e02020" />
    <path d="M25.500 39.500h5l-5 7h5" stroke="#2020e0" />
  </svg>
);

/* ---------- task pane ---------- */
const TaskTabs = () => (
  <div className="absolute right-0 top-[49px] flex w-[26px] flex-col border-l border-t border-[#8a8a8a]">
    {[
      <HomeShape />,
      <g><path d="M2 4l4-3 3 1v15l-3 2-4-2zM8 4l4-3 2 1v15l-3 2-3-2zM13 4l3-3 3 1v14l-3 3-3-2z" fill="#e8e8e8" stroke="#333" strokeWidth=".8" /><path d="M2 4l4 1v14M8 4l3 1v14M13 4l3 1v14" stroke="#444" strokeWidth=".8" /></g>,
      <g><path d="M1 3h6l2 2h8v13H1z" fill="#bbb" /><path d="M1 18l4-10h15l-5 10z" fill="#f0f0f0" stroke="#777" strokeWidth=".5" /></g>,
      <g><rect x="1" y="1" width="18" height="18" fill="#4a3b10" stroke="#ddd" /><path d="M3 3h9v3H3zM14 3h3v3h-3zM4 13h10v4H4zM7 9h4v4H7z" fill="#ffd23c" stroke="#fff3b8" strokeWidth=".4" /><path d="M15 9h3v9h-3z" fill="#ccc" /></g>,
      <BallShape />,
      <ListShape />,
    ].map((g, i) => (
      <div
        key={i}
        className={"flex h-[24px] items-center justify-center border-b border-[#8a8a8a] " + (i ? "bg-[#303030]" : "bg-[#ababab]")}
      >
        <Svg s={18}>{g}</Svg>
      </div>
    ))}
  </div>
);

const PI = {
  tab: <g><SwCube /><path d="M11 10h8v9h-8z" fill="#f2f2f2" stroke="#555" strokeWidth=".7" /><path d="M12.500 13h5M12.500 15h5M12.500 17h5" stroke="#555" strokeWidth=".8" /></g>,
  rx: <g><SwCube /><path d="M9.500 9.500h10v10h-10z" fill="#f5f5f5" stroke="#333" strokeWidth=".7" /><path d="M11.500 18v-6.500h2.200c2 0 2 3 0 3h-2M13.500 14.500l4 4M17.500 14.500l-4 4" stroke="#222" strokeWidth="1.200" /></g>,
  score: <g><rect x="1" y="1" width="18" height="18" rx="2" fill="#4f9cc4" stroke="#b9d9e8" strokeWidth=".6" /><path d="M4 9c1-5 8-5 10-1M16 11c-1 5-8 5-10 1" stroke="#fff" strokeWidth="1.800" /><path d="M16 5v4.500h-4.500zM4 15v-4.500h4.500z" fill="#fff" /><circle cx="10" cy="10" r="1.800" fill="#fff" /></g>,
  wizard: <g><path d="M2 1h4l2 2h5l2-2h3l-2 4H4z" fill="#777" stroke="#bbb" strokeWidth=".6" /><path d="M6 5h6l4 7-4 1z" fill="#eee" stroke="#222" /><path d="M1 14l5-5 3 4-5 5z" fill="#3c8fb8" /><g transform="translate(8 8) scale(.7)"><SwCube /></g></g>,
  products: <g><g transform="scale(.75)"><SwCube /></g><path d="M6 7h8v12H6z" fill="#f2f2f2" stroke="#888" strokeWidth=".6" /><path d="M7 12l1.500 2 3-4M7 16l1.500 2 3-4" stroke="#2c8c2c" strokeWidth="1.300" /><circle cx="15.500" cy="12" r="2.500" fill="#ccc" /><path d="M11 19c0-5 9-5 9 0z" fill="#ccc" /></g>,
  market: <g><circle cx="10" cy="10" r="9.500" fill="#0d3f66" /><ellipse cx="10" cy="6" rx="7" ry="4.500" fill="#5ba7d0" opacity=".8" /><path d="M8.500 7.500l4 2.500-4 2.500z" stroke="#fff" /><path d="M4 9v2M15 9l2 2M7.500 15c1 1.500 4 1.500 5 0" stroke="#fff" strokeWidth="1.400" /></g>,
  partner: <g><path d="M1 3l4 1.500h10L19 3v5l-2.500 1-6.500 5-6-5-3-1z" fill="#e8e8e8" stroke="#777" strokeWidth=".7" /><path d="M7 6l3 2 4 3M7 10l3 2M9 8l4 4M4 4v4M16 4v4" stroke="#666" /></g>,
  sub: <g><circle cx="8" cy="8" r="7.500" fill="#2f7fae" /><path d="M2 5c3-3 6-3 7-1L7 8H3zM9 10l4-3 2 3-4 4zM4 12l3 2" fill="#eee" stroke="#eee" /><g transform="translate(7 7) scale(.78)"><SwCube /></g></g>,
};

const PaneSection = ({ title, items, className = "" }) => (
  <div className={"border-t border-[#8a8a8a] " + className}>
    <div className="flex h-[24px] items-center justify-between pl-[3px] pr-[6px]">
      <span className="font-bold tracking-[-0.400px] text-[#f2f2f2]">{title}</span>
      <svg width="13" height="10" viewBox="0 0 13 10" fill="none" stroke="#a8a8a8" strokeWidth="2">
        <path d="M1 5l5.500-4L12 5M1 9l5.500-4L12 9" />
      </svg>
    </div>
    {items.map(([t, ic]) => (
      <div key={t} className="flex h-[28px] items-center whitespace-nowrap pl-[3px]">
        <Svg s={19} className="-mt-[4px]">{PI[ic]}</Svg>
        <span className="ml-[4px] text-[#f0f0f0]">{t}</span>
      </div>
    ))}
  </div>
);

const TaskPane = () => (
  <div className="flex w-[310px] shrink-0 flex-col border-l border-r border-[#8a8a8a]">
    <div className="flex h-[22px] shrink-0 items-center border-b-2 border-[#1c1c1c] bg-[#a8a9ad] pl-[9px] pr-[6px]">
      <svg width="12" height="9" viewBox="0 0 12 9" fill="none" stroke="#111" strokeWidth="1.800">
        <path d="M5.500.5l-4 4 4 4M10.500.5l-4 4 4 4" />
      </svg>
      <div className="flex-1 pl-[1px] text-center font-bold text-[#f4f4f4]">SOLIDWORKS Resources</div>
      <Svg s={17}>
        <GearShape c="#222" />
        <circle cx="10" cy="10" r="5" stroke="#e8e8e8" strokeWidth="2.400" />
        {[0, 45, 90, 135, 180, 225, 270, 315].map((a) => (
          <path key={a} d="M10 5V2.500" stroke="#e8e8e8" strokeWidth="1.300" transform={`rotate(${a} 10 10)`} />
        ))}
        <circle cx="10" cy="10" r="3.300" stroke="#222" strokeWidth="1.200" />
      </Svg>
      <Svg s={14} className="ml-[5px]">
        <path d="M11 1l8 8-3 .5-3.500 3.500-.5 4-3.500-3.500L1 20l6-8-4-4 4.500-.5L11 4z" fill="#111" stroke="#eee" strokeWidth=".5" />
      </Svg>
    </div>
    <div className="flex-1 border-l-[3px] border-[#a8a9ad] pl-[11px] pr-[27px] tracking-[-0.330px]">
      <div className="flex h-[73px] items-center pl-[1px] pt-[5px]">
        <Svg s={18} className="-mt-[5px]">
          <HomeShape />
        </Svg>
        <span className="ml-[5px] text-[#f0f0f0]">Welcome to SOLIDWORKS</span>
      </div>
      <PaneSection
        className="h-[215px]"
        title="SOLIDWORKS Tools"
        items={[
          ["Property Tab Builder", "tab"],
          ["SOLIDWORKS Rx", "rx"],
          ["Performance Benchmark Test", "rx"],
          ["Compare My Score", "score"],
          ["SOLIDWORKS Settings Wizard", "wizard"],
          ["My Products", "products"],
        ]}
      />
      <PaneSection
        className="h-[103px]"
        title="Online Resources"
        items={[
          ["3DEXPERIENCE Marketplace", "market"],
          ["Partner Solutions", "partner"],
        ]}
      />
      <PaneSection title="Subscription Services" items={[["Subscription Services", "sub"]]} />
    </div>
    <div className="flex h-px">
      <div className="w-[49px] bg-white" />
      <div className="flex-1 bg-[#d161b8]" />
    </div>
  </div>
);

/* ---------- right sketch toolbar ---------- */
const B = ({ d }) => (
  <g strokeLinecap="round">
    <path d={d} stroke="#a8a8a8" strokeWidth="5" />
    <path d={d} stroke="#1f78a8" strokeWidth="2.600" />
  </g>
);
const Pt = ({ x, y }) => <rect x={x - 1.700} y={y - 1.700} width="3.600" height="3.600" fill="#fff" stroke="#222" strokeWidth=".7" />;
const noteBox = (c, t) => (
  <g>
    <path d="M2 2h14v14H2z" fill={c} />
    <path d="M5 14l3.500-9L12 14M6.500 11h4" stroke={t} strokeWidth="1.700" />
    <circle cx="13" cy="4.500" r="1.500" stroke={t} />
  </g>
);
const RIGHT = [
  [<g><path d="M3 8l14-5v14H3z" fill="#333" stroke="#777" strokeWidth="3.500" /><path d="M3 8l14-5-2 14H3z" stroke="#f2f2f2" strokeWidth="2" /></g>, 0],
  [<g><B d="M2 11l7 7M12 3l7 7" /><path d="M3 8l2-5 2 2 3-3 2 2-3 3 2 2-5 2z" fill="#222" stroke="#aaa" strokeWidth=".7" /></g>, 1],
  ["sep"],
  [<g><B d="M2 18L18 2" /><Pt x={2} y={18} /><Pt x={18} y={2} /></g>, 1],
  [<g><B d="M2 4h16v12H2z" /><Pt x={2} y={16} /><Pt x={18} y={4} /></g>, 1],
  [<g><B d="M6 4h8c6 0 6 12 0 12H6C0 16 0 4 6 4z" /><path d="M6 8h8v4H6z" stroke="#999" /><Pt x={8} y={10} /><Pt x={13} y={10} /></g>, 1],
  [<g><B d="M10 2a8 8 0 1 1 0 16a8 8 0 1 1 0-16z" /><Pt x={10} y={10} /><Pt x={16} y={4} /></g>, 1],
  [<g><path d="M2 10a8 8 0 0 0 16 0" stroke="#aaa" strokeWidth="4" strokeDasharray="3 1" /><B d="M4 5c4-4 9-4 12 0" /><path d="M4 5l6 5" stroke="#ccc" strokeWidth="2" /><Pt x={3} y={5} /><Pt x={10} y={10} /><Pt x={17} y={7} /></g>, 1],
  [<g><B d="M2 17C5 17 4 3 7 3s3 14 6 14S14 2 18 2" /></g>, 1],
  [<g transform="rotate(-35 10 10)"><B d="M10 3.500c12 0 12 13 0 13s-12-13 0-13z" /><Pt x={10} y={10} /></g>, 1],
  [<g stroke="#6a6a6a"><path d="M1 2h9c6 0 9 4 9 9v8M1 5h8c5 0 7 3 7 7v7" /><path d="M7 9l5 5M12 9l-5 5" /></g>, 2],
  [<rect x="7" y="7" width="6" height="6" fill="#3d9dca" stroke="#d5e8f0" strokeWidth="1.300" />, 0],
  [<g><path d="M3 4l7-1v13l-7 2zM10 3l7-2v14l-7 2z" fill="#efefef" stroke="#efefef" strokeDasharray="2 1" /><path d="M10 0v20M3 11l14-3" stroke="#8a8a8a" strokeDasharray="3 1.500" /></g>, 0],
  ["sep"],
  [<g stroke="#6a6a6a"><path d="M5 1h3v14h6v3H1v-3h4z" /><circle cx="14" cy="15" r="3.500" /></g>, 2],
  [<g><path d="M2 19V2h17" stroke="#9fb7c2" strokeWidth="4" /><path d="M2 19V2h17" stroke="#1f6f9a" strokeWidth="2.400" /><circle cx="11.500" cy="11.500" r="6.500" fill="#333" stroke="#c9c9c9" strokeWidth="1.500" /><circle cx="11.500" cy="11.500" r="3.500" stroke="#bbb" /><circle cx="11.500" cy="11.500" r="1.800" fill="#3d9dca" /></g>, 1],
  ["sep"],
  [<g><path d="M3 4l7-3 8 3v11l-6 4-9-4z" fill="#f2f2f2" stroke="#777" strokeWidth=".8" /><path d="M3 4l6 3 9-3" stroke="#333" strokeWidth=".8" /><path d="M9 7v12" stroke="#2078a5" strokeWidth="2" /></g>, 1],
  [<g stroke="#6f6f6f"><path d="M1 1h14v4H6v9h13v4H1zM4 4v11" /></g>, 0],
  [<g stroke="#6a6a6a"><circle cx="4" cy="5" r="2.500" /><circle cx="4" cy="14" r="2.500" /><path d="M6 12l10-8M9 8h10M14 1v18M9 16h10v2H1" /></g>, 2],
  [<g stroke="#6f6f6f"><path d="M2 1h5v3h3v4H7M2 1v8h5M12 1h4v3h3v4h-3v1h-4zM2 11h5v3h3v4H2zM12 11h4v3h3v4h-7z" /></g>, 2],
  [<g stroke="#6a6a6a"><path d="M11 1h8v8h-8zM13.500 3.500h3v3h-3zM1 10h8v9H1zM4 10v9M1 13h8M1 16h8" /><path d="M1 8l4-4-2-3h6v6L7 5 3 9z" fill="#333" /></g>, 2],
  ["sep"],
  [<g transform="translate(2 2)">{noteBox("#707070", "#4a4a4a")}<path d="M-1 1h5M1.500-1v5" stroke="#777" /></g>, 0],
  [<g>{noteBox("#707070", "#4a4a4a")}<path d="M8 16l8-10 3 2-8 10z" fill="#4d4d4d" stroke="#777" /></g>, 0],
  [<g>{noteBox("#f4f4f4", "#222")}<path d="M11 11l3-1 2 2 3-2v9h-8l2-3z" fill="#2f9410" stroke="#dfe" strokeWidth=".5" /></g>, 0],
  [<g>{noteBox("#707070", "#4a4a4a")}<path d="M13 7v4h-3v3h9v-3h-3V7zM10 15h9v3h-9z" fill="#4d4d4d" stroke="#777" /></g>, 0],
  [<g>{noteBox("#707070", "#4a4a4a")}<path d="M8 7h11v11H8z" fill="#555" stroke="#888" /><path d="M10 9h7M10 11h7M11 15h5v3" stroke="#888" /></g>, 0],
  [<g><rect x="1" y="1" width="18" height="18" stroke="#808080" strokeWidth="2" strokeDasharray="2 1.500" /><g transform="translate(1 1)">{noteBox("#707070", "#4a4a4a")}</g></g>, 0],
];
const RightBar = () => (
  <div className="flex w-[47px] shrink-0 flex-col overflow-hidden">
    <Grip n={11} className="mb-[9px] mt-[2px] pl-[3px]" />
    {RIGHT.map(([g, dd], i) =>
      g === "sep" ? (
        <Sep key={i} className="pl-[5px] pr-[1px]" />
      ) : (
        <div key={i} className="flex h-[26px] shrink-0 items-center pl-[7px]">
          <Svg s={20}>{g}</Svg>
          {dd ? <Caret className="ml-[9px] mt-[-2px]" c={dd === 2 ? "#8c8c8c" : "#f0f0f0"} /> : null}
        </div>
      )
    )}
    <svg width="9" height="10" viewBox="0 0 9 10" fill="none" stroke="#fff" strokeWidth="1.500" className="ml-[19px] mt-[7px] block shrink-0">
      <path d="M1 1l3.500 3L8 1M1 5.500l3.500 3L8 5.500" />
    </svg>
    <div className="mb-[2px] mt-auto h-px bg-[#8a8a8a]" />
  </div>
);

const StatusBar = () => (
  <div className="flex h-[19px] shrink-0 items-center whitespace-nowrap border-t border-[#8a8a8a] pl-[1px] pt-[2px] tracking-[-0.180px] text-[#f0f0f0]">
    <div className="w-[1190px]">SOLIDWORKS Premium 2023 SP2.1</div>
    <div className="w-[94px] tracking-[-0.200px]">Under Defined</div>
    <div className="w-[118px] tracking-[-0.050px]">Editing Assembly</div>
    <Svg s={16}>
      <path d="M1 13h18v6H1z" fill="#2c6d92" stroke="#cfe3ee" />
      <path d="M5 14v5M9 14v5M13 14v5" stroke="#fff" />
      <path d="M12 12c5 0 5-5 3-8l4-3v8l-3-1" fill="#111" stroke="#ddd" />
      <path d="M7 1l6 11H1z" fill="#ffcf1c" stroke="#a35b10" />
      <path d="M7 5v3.500M7 9.500V11" stroke="#000" strokeWidth="1.400" />
    </Svg>
    <div className="ml-[75px] w-[54px] tracking-normal">MMGS</div>
    <svg width="5" height="3" viewBox="0 0 5 3"><path d="M0 3h5L2.500 0z" fill="#f0f0f0" /></svg>
    <Svg s={15} className="ml-[28px]">
      <path d="M1 4l7-3 2 4 8 3-1 6-8 5-6-4z" fill="#dcdcdc" stroke="#555" />
      <path d="M3 7l6 3 8-2M9 10v8M5 4l4 3" stroke="#333" strokeWidth="1.400" />
    </Svg>
  </div>
);

export default function App() {
  return (
    <div className="flex h-[860px] w-[1600px] flex-col overflow-hidden bg-[#4a4a4a] font-['Noto_Sans','Liberation_Sans',sans-serif] text-[11.500px] leading-[16px]">
      <div className="flex h-px shrink-0 bg-[#c4c4c4]">
        <div className="ml-[680px] w-[48px] bg-[#f255b5]" />
        <div className="w-[193px] bg-[#1c1c1c]" />
      </div>
      <TitleBar />
      <Ribbon />
      <div className="flex h-[724px] shrink-0">
        <div className="relative flex w-[1243px] shrink-0 flex-col">
          <div className="flex shrink-0 bg-white">
            <CommandTabs />
          </div>
          <div className="flex h-[702px] shrink-0">
            <LeftBar />
            <FeaturePanel />
            <div className="flex flex-1 flex-col">
              <div className="relative h-[688px] border-b border-l-2 border-[#8a8a8a] bg-white">
                <Model />
                <Triad />
                <div className="absolute left-[-1px] top-[313px] flex h-[39px] w-[8px] items-center justify-center bg-[#4a4a4a]">
                  <i className="h-[7px] w-[7px] rounded-full border border-[#8d8d8d] bg-[#e0e0e0]" />
                </div>
              </div>
            </div>
          </div>
          <Hud />
          <DocButtons />
          <TaskTabs />
        </div>
        <TaskPane />
        <RightBar />
      </div>
      <StatusBar />
    </div>
  );
}
